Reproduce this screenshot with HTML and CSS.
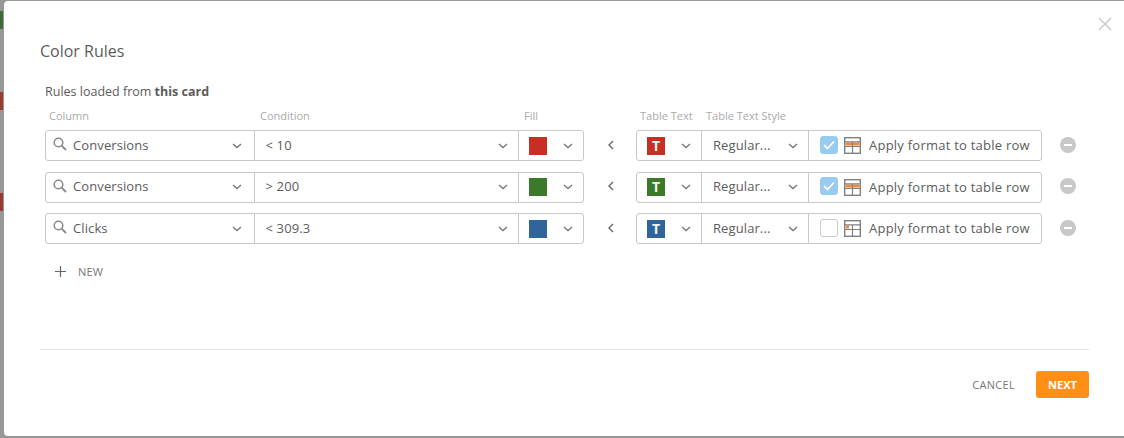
FILE: index.html
```html
<!DOCTYPE html>
<html lang="en">
<head>
    <meta charset="UTF-8">
    <title>Color Rules</title>
    <link rel="stylesheet" href="styles.css">
</head>
<body>
    <svg width="0" height="0" class="defs">
        <symbol id="search" viewBox="0 0 14 14"><circle cx="5.500" cy="5.500" r="4.300" fill="none" stroke="currentColor" stroke-width="1.500"/><path d="M8.600 8.600L13 13" stroke="currentColor" stroke-width="1.800" fill="none"/></symbol>
        <symbol id="chev" viewBox="0 0 10 6"><path d="M1 1l4 3.600L9 1" stroke="currentColor" stroke-width="1.300" fill="none"/></symbol>
    </svg>
    <div class="backdrop">
        <span class="spot green"></span>
        <span class="spot red first"></span>
        <span class="spot red second"></span>
    </div>
    <div class="modal">
        <svg class="close" width="14" height="14" viewBox="0 0 14 14"><path d="M1 1l12 12M13 1L1 13" stroke="#c8c8c8" stroke-width="1.400" fill="none"/></svg>
        <h1 class="title">Color Rules</h1>
        <p class="loaded">Rules loaded from <b>this card</b></p>

        <div class="heads">
            <span class="h-column">Column</span>
            <span class="h-cond">Condition</span>
            <span class="h-fill">Fill</span>
            <span class="h-text">Table Text</span>
            <span class="h-style">Table Text Style</span>
        </div>

        <div class="row">
            <div class="group left">
                <div class="cell column"><svg class="search"><use href="#search"/></svg><span class="val">Conversions</span><svg class="chev"><use href="#chev"/></svg></div>
                <div class="cell cond"><span class="val">&lt; 10</span><svg class="chev"><use href="#chev"/></svg></div>
                <div class="cell fill"><span class="swatch red"></span><svg class="chev"><use href="#chev"/></svg></div>
            </div>
            <svg class="back" width="7" height="10" viewBox="0 0 7 10"><path d="M6 1L2 5l4 4" stroke="#666" stroke-width="1.400" fill="none"/></svg>
            <div class="group right">
                <div class="cell text"><span class="swatch red">T</span><svg class="chev"><use href="#chev"/></svg></div>
                <div class="cell style"><span class="val">Regular...</span><svg class="chev"><use href="#chev"/></svg></div>
                <div class="cell apply">
                    <span class="check on"><svg width="12" height="10" viewBox="0 0 12 10"><path d="M1 5l3.500 3.500L11 1.500" stroke="#fff" stroke-width="1.800" fill="none"/></svg></span>
                    <svg class="tbl" width="17" height="17" viewBox="0 0 17 17"><rect x="0.700" y="0.700" width="15.600" height="15.600" fill="#fff" stroke="#808080" stroke-width="1.400"/><rect x="1.500" y="5.500" width="14" height="3" fill="#f08a33"/><path d="M1 4.800h15M1 9.500h15M8.500 5v11" stroke="#808080" stroke-width="1.200" fill="none"/></svg>
                    <span class="val">Apply format to table row</span>
                </div>
            </div>
            <span class="minus"></span>
        </div>

        <div class="row">
            <div class="group left">
                <div class="cell column"><svg class="search"><use href="#search"/></svg><span class="val">Conversions</span><svg class="chev"><use href="#chev"/></svg></div>
                <div class="cell cond"><span class="val">&gt; 200</span><svg class="chev"><use href="#chev"/></svg></div>
                <div class="cell fill"><span class="swatch green"></span><svg class="chev"><use href="#chev"/></svg></div>
            </div>
            <svg class="back" width="7" height="10" viewBox="0 0 7 10"><path d="M6 1L2 5l4 4" stroke="#666" stroke-width="1.400" fill="none"/></svg>
            <div class="group right">
                <div class="cell text"><span class="swatch green">T</span><svg class="chev"><use href="#chev"/></svg></div>
                <div class="cell style"><span class="val">Regular...</span><svg class="chev"><use href="#chev"/></svg></div>
                <div class="cell apply">
                    <span class="check on"><svg width="12" height="10" viewBox="0 0 12 10"><path d="M1 5l3.500 3.500L11 1.500" stroke="#fff" stroke-width="1.800" fill="none"/></svg></span>
                    <svg class="tbl" width="17" height="17" viewBox="0 0 17 17"><rect x="0.700" y="0.700" width="15.600" height="15.600" fill="#fff" stroke="#808080" stroke-width="1.400"/><rect x="1.500" y="5.500" width="14" height="3" fill="#f08a33"/><path d="M1 4.800h15M1 9.500h15M8.500 5v11" stroke="#808080" stroke-width="1.200" fill="none"/></svg>
                    <span class="val">Apply format to table row</span>
                </div>
            </div>
            <span class="minus"></span>
        </div>

        <div class="row">
            <div class="group left">
                <div class="cell column"><svg class="search"><use href="#search"/></svg><span class="val">Clicks</span><svg class="chev"><use href="#chev"/></svg></div>
                <div class="cell cond"><span class="val">&lt; 309.3</span><svg class="chev"><use href="#chev"/></svg></div>
                <div class="cell fill"><span class="swatch blue"></span><svg class="chev"><use href="#chev"/></svg></div>
            </div>
            <svg class="back" width="7" height="10" viewBox="0 0 7 10"><path d="M6 1L2 5l4 4" stroke="#666" stroke-width="1.400" fill="none"/></svg>
            <div class="group right">
                <div class="cell text"><span class="swatch blue">T</span><svg class="chev"><use href="#chev"/></svg></div>
                <div class="cell style"><span class="val">Regular...</span><svg class="chev"><use href="#chev"/></svg></div>
                <div class="cell apply">
                    <span class="check"></span>
                    <svg class="tbl" width="17" height="17" viewBox="0 0 17 17"><rect x="0.700" y="0.700" width="15.600" height="15.600" fill="#fff" stroke="#808080" stroke-width="1.400"/><rect x="2" y="5.500" width="3" height="3" fill="#f08a33"/><path d="M1 4.800h15M1 9.500h15M8.500 5v11" stroke="#808080" stroke-width="1.200" fill="none"/></svg>
                    <span class="val">Apply format to table row</span>
                </div>
            </div>
            <span class="minus"></span>
        </div>

        <div class="add">
            <svg width="11" height="11" viewBox="0 0 11 11"><path d="M5.500 0v11M0 5.500h11" stroke="#666" stroke-width="1.200" fill="none"/></svg>
            <span>NEW</span>
        </div>

        <div class="footer">
            <button class="cancel">CANCEL</button>
            <button class="next">NEXT</button>
        </div>
    </div>
</body>
</html>
```

FILE: styles.css
```css
*{
    margin: 0;
    padding: 0;
    box-sizing: border-box;
}

html, body{
    height: 100%;
    overflow: hidden;
}
body{
    background: #989898;
    font-family: "Open Sans", sans-serif;
    color: #555;
    display: flex;
    align-items: flex-start;
}
.defs{
    position: absolute;
}

.backdrop{
    width: 4px;
    height: 100%;
    flex: none;
    display: flex;
    flex-direction: column;
}
.spot{
    display: block;
    width: 3px;
    height: 18px;
}
.spot.green{
    background: #3e6b37;
    margin-top: 11px;
}
.spot.red{
    background: #9c3a32;
}
.spot.first{
    margin-top: 63px;
}
.spot.second{
    margin-top: 83px;
}

.modal{
    position: relative;
    flex: 1;
    height: 435px;
    margin-top: 1px;
    background: #fff;
    border-radius: 4px 0 0 4px;
    padding: 0 35px 0 36px;
}
.close{
    position: absolute;
    top: 16px;
    right: 12px;
}
.title{
    font-size: 16px;
    font-weight: 400;
    line-height: 22px;
    margin-top: 39px;
    color: #5c5c5c;
}
.loaded{
    font-size: 12.500px;
    line-height: 18px;
    margin: 21px 0 0 5px;
    color: #5c5c5c;
}
.loaded b{
    font-weight: 700;
}

.heads{
    display: flex;
    height: 18px;
    margin: 6px 0 5px 5px;
    font-size: 11px;
    line-height: 18px;
    color: #aaa;
}
.h-column{
    width: 215px;
    padding-left: 4px;
}
.h-cond{
    width: 264px;
}
.h-fill{
    width: 116px;
}
.h-text{
    width: 66px;
}

.row{
    display: flex;
    align-items: center;
    height: 31px;
    margin: 0 0 10.500px 5px;
    font-size: 13px;
}
.group{
    display: flex;
    height: 100%;
    border: 1px solid #c8c8c8;
    border-radius: 3px;
}
.left{
    width: 539px;
}
.right{
    width: 406px;
}
.cell{
    display: flex;
    align-items: center;
    height: 100%;
    border-left: 1px solid #c8c8c8;
    padding: 0 8px 0 11px;
}
.cell:first-child{
    border-left: none;
}
.chev{
    width: 10px;
    height: 6px;
    margin-left: auto;
    color: #777;
    flex: none;
}
.val{
    color: #5c5c5c;
    white-space: nowrap;
    letter-spacing: 0.100px;
    margin-bottom: 2px;
}
.column{
    width: 208px;
    padding-left: 7px;
    padding-right: 12px;
}
.search{
    width: 14px;
    height: 14px;
    color: #888;
    margin-right: 6px;
    margin-top: -3px;
}
.cond{
    width: 265px;
    padding-left: 11px;
    padding-right: 10px;
}
.fill{
    width: 65px;
    padding-left: 10px;
    padding-right: 10px;
}
.swatch{
    width: 18px;
    height: 18px;
    color: #f4f4f4;
    font-size: 14px;
    font-weight: 700;
    line-height: 18px;
    text-align: center;
}
.swatch.red{
    background: #c92e25;
}
.swatch.green{
    background: #3b7a28;
}
.swatch.blue{
    background: #30659b;
}
.back{
    margin-left: 23px;
    margin-right: 22px;
    margin-top: -2px;
    flex: none;
}
.text{
    width: 64px;
    padding-left: 10px;
    padding-right: 10px;
}
.style{
    width: 107px;
    padding-left: 11px;
    padding-right: 10px;
}
.apply{
    flex: 1;
    padding-left: 11px;
    padding-right: 0;
}
.check{
    display: flex;
    align-items: center;
    justify-content: center;
    width: 18px;
    height: 18px;
    border: 1px solid #ccc;
    border-radius: 3px;
    margin-top: -2px;
}
.check.on{
    background: #97cbf0;
    border-color: #97cbf0;
}
.tbl{
    margin-left: 6px;
    margin-right: 8px;
    flex: none;
}
.apply .val{
    letter-spacing: 0.240px;
    margin-bottom: 1px;
}
.minus{
    position: relative;
    width: 16px;
    height: 16px;
    margin-left: 18px;
    margin-top: -2px;
    border-radius: 50%;
    background: #c8c8c8;
    flex: none;
}
.minus::after{
    content: "";
    position: absolute;
    left: 4px;
    top: 7px;
    width: 8px;
    height: 2px;
    background: #fff;
}

.add{
    display: flex;
    align-items: center;
    gap: 12px;
    height: 18px;
    margin: 18px 0 0 15px;
    font-size: 11px;
    letter-spacing: 0.200px;
    color: #777;
}

.footer{
    display: flex;
    justify-content: flex-end;
    align-items: center;
    gap: 21px;
    margin-top: 69px;
    padding-top: 21px;
    border-top: 1px solid #e3e3e3;
}
button{
    border: none;
    background: none;
    font-family: inherit;
    font-size: 11px;
    cursor: pointer;
}
.cancel{
    color: #777;
    letter-spacing: 0.300px;
}
.next{
    width: 53px;
    height: 27px;
    background: #ff9015;
    border-radius: 3px;
    color: #fff;
    font-weight: 700;
}
```
